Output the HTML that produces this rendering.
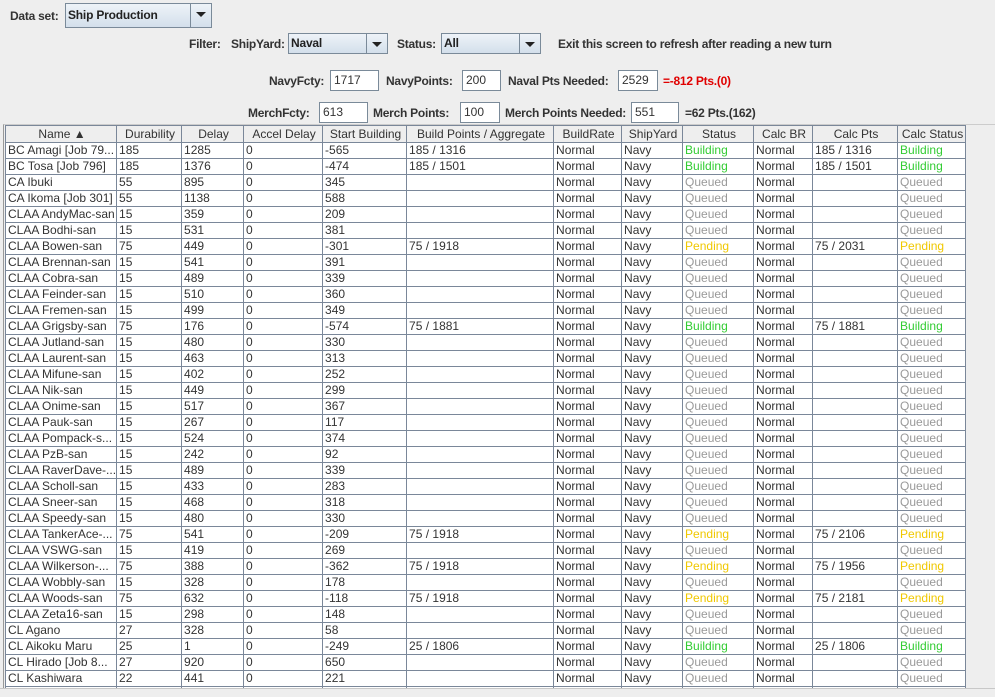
<!DOCTYPE html>
<html><head><meta charset="utf-8">
<style>
body{margin:0;width:995px;height:696px;background:#eeeeee;position:relative;overflow:hidden;font-family:"Liberation Sans",Arial,sans-serif;}
.l{position:absolute;font-weight:bold;font-size:12px;letter-spacing:-0.25px;color:#333;white-space:nowrap;line-height:14px}
.cb{position:absolute;height:21px;border:1px solid #7a8a99;background:linear-gradient(#eef3f8,#d3dfeb);box-sizing:border-box;font-weight:bold;font-size:12px;letter-spacing:-0.2px;color:#222;line-height:19px;padding-left:2px}
.cb .ar{position:absolute;right:0;top:0;bottom:0;width:20px;border-left:1px solid #7a8a99;background:linear-gradient(#eef3f8,#d3dfeb)}
.cb .ar:after{content:"";position:absolute;left:5px;top:8px;border-left:5px solid transparent;border-right:5px solid transparent;border-top:5px solid #222}
.tf{position:absolute;height:21px;background:#fff;border:1px solid #7a8a99;box-sizing:border-box;font-size:12px;color:#333;line-height:19px;padding-left:3px}
.red{color:#e00000}
#sp{position:absolute;left:3px;top:124px;width:992px;height:564px;border-left:1px solid #999;border-top:1px solid #ccc;overflow:hidden;}
table{position:absolute;left:1px;top:0;border-collapse:collapse;table-layout:fixed;font-size:12px;color:#333}
td,th{border:1px solid #7a8799;height:15px;padding:0 0 0 2px;white-space:nowrap;overflow:hidden;line-height:15px;text-align:left}
th{font-weight:normal;background:#eeeeee;text-align:center;color:#333;height:16px}
td{background:#fff}
.b{color:#33cc33}.p{color:#f0c800}.q{color:#999}
#bot{position:absolute;left:0;top:688px;width:995px;height:8px;background:#eeeeee;border-top:1px solid #c8c8c8}
</style></head><body>
<div class="l" style="left:10px;top:9px">Data set:</div>
<div class="cb" style="left:65px;top:3px;width:147px;height:25px;line-height:23px">Ship Production<div class="ar"></div></div>

<div class="l" style="left:189px;top:37px">Filter:</div>
<div class="l" style="left:231px;top:37px">ShipYard:</div>
<div class="cb" style="left:288px;top:33px;width:100px">Naval<div class="ar"></div></div>
<div class="l" style="left:397px;top:37px">Status:</div>
<div class="cb" style="left:441px;top:33px;width:100px">All<div class="ar"></div></div>
<div class="l" style="left:558px;top:37px">Exit this screen to refresh after reading a new turn</div>

<div class="l" style="left:269px;top:74px">NavyFcty:</div>
<div class="tf" style="left:330px;top:70px;width:49px">1717</div>
<div class="l" style="left:386px;top:74px">NavyPoints:</div>
<div class="tf" style="left:462px;top:70px;width:39px">200</div>
<div class="l" style="left:508px;top:74px">Naval Pts Needed:</div>
<div class="tf" style="left:618px;top:70px;width:40px">2529</div>
<div class="l red" style="left:663px;top:74px">=-812 Pts.(0)</div>

<div class="l" style="left:248px;top:106px">MerchFcty:</div>
<div class="tf" style="left:319px;top:102px;width:49px">613</div>
<div class="l" style="left:373px;top:106px">Merch Points:</div>
<div class="tf" style="left:460px;top:102px;width:40px">100</div>
<div class="l" style="left:505px;top:106px">Merch Points Needed:</div>
<div class="tf" style="left:631px;top:102px;width:48px">551</div>
<div class="l" style="left:685px;top:106px">=62 Pts.(162)</div>

<div id="sp">
<table>
<colgroup><col style="width:111px"><col style="width:65px"><col style="width:62px"><col style="width:79px"><col style="width:84px"><col style="width:147px"><col style="width:68px"><col style="width:61px"><col style="width:71px"><col style="width:59px"><col style="width:85px"><col style="width:68px"></colgroup>
<tr><th>Name &#9650;</th><th>Durability</th><th>Delay</th><th>Accel Delay</th><th>Start Building</th><th>Build Points / Aggregate</th><th>BuildRate</th><th>ShipYard</th><th>Status</th><th>Calc BR</th><th>Calc Pts</th><th>Calc Status</th></tr>
<tr><td>BC Amagi [Job 79...</td><td>185</td><td>1285</td><td>0</td><td>-565</td><td>185 / 1316</td><td>Normal</td><td>Navy</td><td class="b">Building</td><td>Normal</td><td>185 / 1316</td><td class="b">Building</td></tr>
<tr><td>BC Tosa [Job 796]</td><td>185</td><td>1376</td><td>0</td><td>-474</td><td>185 / 1501</td><td>Normal</td><td>Navy</td><td class="b">Building</td><td>Normal</td><td>185 / 1501</td><td class="b">Building</td></tr>
<tr><td>CA Ibuki</td><td>55</td><td>895</td><td>0</td><td>345</td><td></td><td>Normal</td><td>Navy</td><td class="q">Queued</td><td>Normal</td><td></td><td class="q">Queued</td></tr>
<tr><td>CA Ikoma [Job 301]</td><td>55</td><td>1138</td><td>0</td><td>588</td><td></td><td>Normal</td><td>Navy</td><td class="q">Queued</td><td>Normal</td><td></td><td class="q">Queued</td></tr>
<tr><td>CLAA AndyMac-san</td><td>15</td><td>359</td><td>0</td><td>209</td><td></td><td>Normal</td><td>Navy</td><td class="q">Queued</td><td>Normal</td><td></td><td class="q">Queued</td></tr>
<tr><td>CLAA Bodhi-san</td><td>15</td><td>531</td><td>0</td><td>381</td><td></td><td>Normal</td><td>Navy</td><td class="q">Queued</td><td>Normal</td><td></td><td class="q">Queued</td></tr>
<tr><td>CLAA Bowen-san</td><td>75</td><td>449</td><td>0</td><td>-301</td><td>75 / 1918</td><td>Normal</td><td>Navy</td><td class="p">Pending</td><td>Normal</td><td>75 / 2031</td><td class="p">Pending</td></tr>
<tr><td>CLAA Brennan-san</td><td>15</td><td>541</td><td>0</td><td>391</td><td></td><td>Normal</td><td>Navy</td><td class="q">Queued</td><td>Normal</td><td></td><td class="q">Queued</td></tr>
<tr><td>CLAA Cobra-san</td><td>15</td><td>489</td><td>0</td><td>339</td><td></td><td>Normal</td><td>Navy</td><td class="q">Queued</td><td>Normal</td><td></td><td class="q">Queued</td></tr>
<tr><td>CLAA Feinder-san</td><td>15</td><td>510</td><td>0</td><td>360</td><td></td><td>Normal</td><td>Navy</td><td class="q">Queued</td><td>Normal</td><td></td><td class="q">Queued</td></tr>
<tr><td>CLAA Fremen-san</td><td>15</td><td>499</td><td>0</td><td>349</td><td></td><td>Normal</td><td>Navy</td><td class="q">Queued</td><td>Normal</td><td></td><td class="q">Queued</td></tr>
<tr><td>CLAA Grigsby-san</td><td>75</td><td>176</td><td>0</td><td>-574</td><td>75 / 1881</td><td>Normal</td><td>Navy</td><td class="b">Building</td><td>Normal</td><td>75 / 1881</td><td class="b">Building</td></tr>
<tr><td>CLAA Jutland-san</td><td>15</td><td>480</td><td>0</td><td>330</td><td></td><td>Normal</td><td>Navy</td><td class="q">Queued</td><td>Normal</td><td></td><td class="q">Queued</td></tr>
<tr><td>CLAA Laurent-san</td><td>15</td><td>463</td><td>0</td><td>313</td><td></td><td>Normal</td><td>Navy</td><td class="q">Queued</td><td>Normal</td><td></td><td class="q">Queued</td></tr>
<tr><td>CLAA Mifune-san</td><td>15</td><td>402</td><td>0</td><td>252</td><td></td><td>Normal</td><td>Navy</td><td class="q">Queued</td><td>Normal</td><td></td><td class="q">Queued</td></tr>
<tr><td>CLAA Nik-san</td><td>15</td><td>449</td><td>0</td><td>299</td><td></td><td>Normal</td><td>Navy</td><td class="q">Queued</td><td>Normal</td><td></td><td class="q">Queued</td></tr>
<tr><td>CLAA Onime-san</td><td>15</td><td>517</td><td>0</td><td>367</td><td></td><td>Normal</td><td>Navy</td><td class="q">Queued</td><td>Normal</td><td></td><td class="q">Queued</td></tr>
<tr><td>CLAA Pauk-san</td><td>15</td><td>267</td><td>0</td><td>117</td><td></td><td>Normal</td><td>Navy</td><td class="q">Queued</td><td>Normal</td><td></td><td class="q">Queued</td></tr>
<tr><td>CLAA Pompack-s...</td><td>15</td><td>524</td><td>0</td><td>374</td><td></td><td>Normal</td><td>Navy</td><td class="q">Queued</td><td>Normal</td><td></td><td class="q">Queued</td></tr>
<tr><td>CLAA PzB-san</td><td>15</td><td>242</td><td>0</td><td>92</td><td></td><td>Normal</td><td>Navy</td><td class="q">Queued</td><td>Normal</td><td></td><td class="q">Queued</td></tr>
<tr><td>CLAA RaverDave-...</td><td>15</td><td>489</td><td>0</td><td>339</td><td></td><td>Normal</td><td>Navy</td><td class="q">Queued</td><td>Normal</td><td></td><td class="q">Queued</td></tr>
<tr><td>CLAA Scholl-san</td><td>15</td><td>433</td><td>0</td><td>283</td><td></td><td>Normal</td><td>Navy</td><td class="q">Queued</td><td>Normal</td><td></td><td class="q">Queued</td></tr>
<tr><td>CLAA Sneer-san</td><td>15</td><td>468</td><td>0</td><td>318</td><td></td><td>Normal</td><td>Navy</td><td class="q">Queued</td><td>Normal</td><td></td><td class="q">Queued</td></tr>
<tr><td>CLAA Speedy-san</td><td>15</td><td>480</td><td>0</td><td>330</td><td></td><td>Normal</td><td>Navy</td><td class="q">Queued</td><td>Normal</td><td></td><td class="q">Queued</td></tr>
<tr><td>CLAA TankerAce-...</td><td>75</td><td>541</td><td>0</td><td>-209</td><td>75 / 1918</td><td>Normal</td><td>Navy</td><td class="p">Pending</td><td>Normal</td><td>75 / 2106</td><td class="p">Pending</td></tr>
<tr><td>CLAA VSWG-san</td><td>15</td><td>419</td><td>0</td><td>269</td><td></td><td>Normal</td><td>Navy</td><td class="q">Queued</td><td>Normal</td><td></td><td class="q">Queued</td></tr>
<tr><td>CLAA Wilkerson-...</td><td>75</td><td>388</td><td>0</td><td>-362</td><td>75 / 1918</td><td>Normal</td><td>Navy</td><td class="p">Pending</td><td>Normal</td><td>75 / 1956</td><td class="p">Pending</td></tr>
<tr><td>CLAA Wobbly-san</td><td>15</td><td>328</td><td>0</td><td>178</td><td></td><td>Normal</td><td>Navy</td><td class="q">Queued</td><td>Normal</td><td></td><td class="q">Queued</td></tr>
<tr><td>CLAA Woods-san</td><td>75</td><td>632</td><td>0</td><td>-118</td><td>75 / 1918</td><td>Normal</td><td>Navy</td><td class="p">Pending</td><td>Normal</td><td>75 / 2181</td><td class="p">Pending</td></tr>
<tr><td>CLAA Zeta16-san</td><td>15</td><td>298</td><td>0</td><td>148</td><td></td><td>Normal</td><td>Navy</td><td class="q">Queued</td><td>Normal</td><td></td><td class="q">Queued</td></tr>
<tr><td>CL Agano</td><td>27</td><td>328</td><td>0</td><td>58</td><td></td><td>Normal</td><td>Navy</td><td class="q">Queued</td><td>Normal</td><td></td><td class="q">Queued</td></tr>
<tr><td>CL Aikoku Maru</td><td>25</td><td>1</td><td>0</td><td>-249</td><td>25 / 1806</td><td>Normal</td><td>Navy</td><td class="b">Building</td><td>Normal</td><td>25 / 1806</td><td class="b">Building</td></tr>
<tr><td>CL Hirado [Job 8...</td><td>27</td><td>920</td><td>0</td><td>650</td><td></td><td>Normal</td><td>Navy</td><td class="q">Queued</td><td>Normal</td><td></td><td class="q">Queued</td></tr>
<tr><td>CL Kashiwara</td><td>22</td><td>441</td><td>0</td><td>221</td><td></td><td>Normal</td><td>Navy</td><td class="q">Queued</td><td>Normal</td><td></td><td class="q">Queued</td></tr>
<tr><td>&nbsp;</td><td></td><td></td><td></td><td></td><td></td><td></td><td></td><td></td><td></td><td></td><td></td></tr>
</table>
</div>
<div id="bot"></div>
</body></html>
